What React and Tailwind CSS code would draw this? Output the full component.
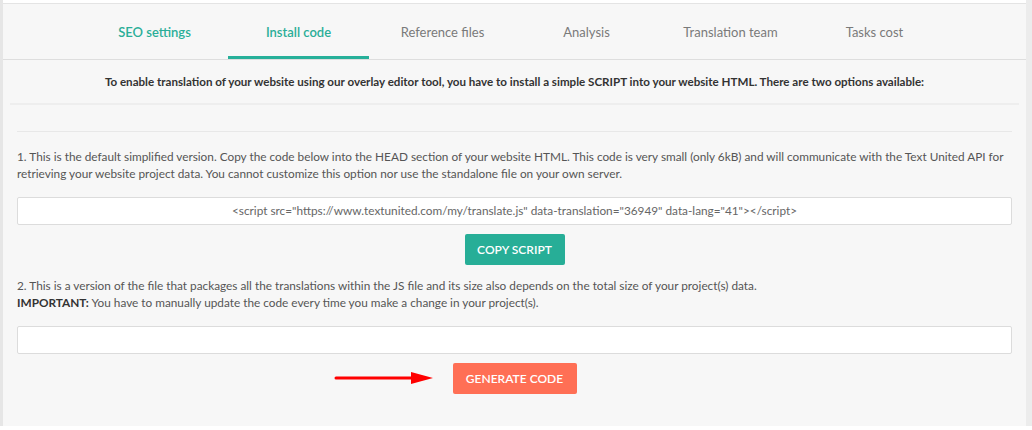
export default function App() {
  const tabs = [
    { label: "SEO settings", color: "text-[#2aae98] font-semibold" },
    { label: "Install code", color: "text-[#2aae98] font-semibold", active: true },
    { label: "Reference files", color: "text-[#7a7a7a]" },
    { label: "Analysis", color: "text-[#7a7a7a]" },
    { label: "Translation team", color: "text-[#7a7a7a]" },
    { label: "Tasks cost", color: "text-[#7a7a7a]" },
  ];

  return (
    <div className="w-[1032px] h-[430px] bg-white font-['Lato','Open_Sans',sans-serif] overflow-hidden">
      <div className="flex h-[426px]">
        <div className="w-[3px] bg-[#e6e6e6]" />
        <div className="flex-1 bg-[#f7f7f7] border-t border-[#e4e4e4] mt-[3px] flex flex-col">
          {/* Tabs */}
          <div className="h-[56px] border-b border-[#dedede] flex justify-center">
            {tabs.map((t) => (
              <div
                key={t.label}
                className="w-[144px] flex flex-col items-center justify-between"
              >
                <div className={`pt-[19px] text-[13px] ${t.color}`}>{t.label}</div>
                <div
                  className={`w-[141px] h-[3px] ${t.active ? "bg-[#27b09a]" : ""}`}
                />
              </div>
            ))}
          </div>

          {/* Intro */}
          <div className="px-[7px]">
            <div className="h-[45px] border-b-2 border-[#eeeeee] flex items-center justify-center text-[11.6px] font-bold text-[#333]">
              To enable translation of your website using our overlay editor tool, you have to install a simple SCRIPT into your website HTML. There are two options available:
            </div>
          </div>

          <div className="px-[14px]">
            <div className="mt-[26px] border-t border-[#e8e8e8]" />

            <p className="mt-[16px] text-[11.8px] leading-[17px] text-[#555]">
              1. This is the default simplified version. Copy the code below into the HEAD section of your website HTML. This code is very small (only 6kB) and will communicate with the Text United API for retrieving your website project data. You cannot customize this option nor use the standalone file on your own server.
            </p>

            <div className="mt-[15px] h-[28px] bg-white border border-[#dcdcdc] rounded-[2px] flex items-center justify-center text-[11.8px] text-[#666]">
              {'<script src="https://www.textunited.com/my/translate.js" data-translation="36949" data-lang="41"></script>'}
            </div>

            <div className="mt-[9px] flex justify-center">
              <button className="w-[100px] h-[31px] bg-[#27ae97] text-white text-[12px] font-semibold rounded-[2px]">
                COPY SCRIPT
              </button>
            </div>

            <p className="mt-[12px] text-[11.8px] leading-[17px] text-[#555]">
              2. This is a version of the file that packages all the translations within the JS file and its size also depends on the total size of your project(s) data.
              <br />
              <span className="font-bold text-[#333]">IMPORTANT:</span> You have to manually update the code every time you make a change in your project(s).
            </p>

            <div className="mt-[15px] h-[28px] bg-white border border-[#dcdcdc] rounded-[2px]" />

            <div className="mt-[9px] flex justify-center">
              <div className="relative">
                <svg
                  className="absolute right-[143px] top-[7px]"
                  width="100"
                  height="16"
                  viewBox="0 0 100 16"
                >
                  <line x1="2" y1="8" x2="80" y2="8" stroke="#f00" strokeWidth="3" strokeLinecap="round" />
                  <polygon points="77,2 99,8 77,14" fill="#f00" />
                </svg>
                <button className="w-[124px] h-[31px] bg-[#ff6f55] text-white text-[12px] font-semibold rounded-[2px]">
                  GENERATE CODE
                </button>
              </div>
            </div>
          </div>
        </div>
        <div className="w-[6px] bg-[#ececec]" />
      </div>
    </div>
  );
}
